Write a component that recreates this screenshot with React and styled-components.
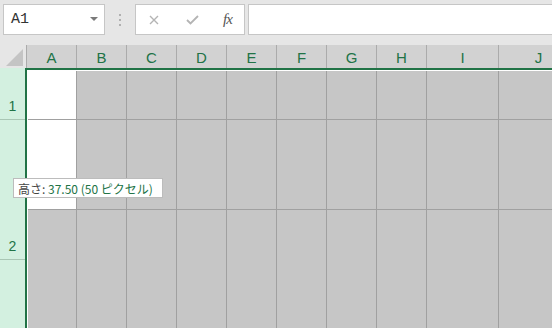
import styled, { createGlobalStyle } from "styled-components";

const Global = createGlobalStyle`
  html, body { margin: 0; padding: 0; }
  body {
    width: 552px;
    height: 328px;
    overflow: hidden;
    background: #e6e6e6;
    font-family: "Liberation Sans", "Noto Sans CJK JP", sans-serif;
  }
`;

const Page = styled.div`
  position: relative;
  width: 552px;
  height: 328px;
  overflow: hidden;
  display: flex;
  flex-direction: column;
`;

const Toolbar = styled.div`
  height: 45px;
  box-sizing: border-box;
  padding: 4px 0 0 3px;
  display: flex;
  align-items: flex-start;
  background: #e6e6e6;
`;

const NameBox = styled.div`
  width: 102px;
  height: 31px;
  box-sizing: border-box;
  background: #fff;
  border: 1px solid #c6c6c6;
  display: flex;
  align-items: center;
  justify-content: space-between;
  padding: 0 6px 0 7px;
  font-family: "Liberation Mono", monospace;
  font-size: 15px;
  color: #333;
`;

const Caret = styled.span`
  width: 0;
  height: 0;
  border-left: 4px solid transparent;
  border-right: 4px solid transparent;
  border-top: 4px solid #7a7a7a;
  margin-top: -2px;
`;

const Grip = styled.div`
  width: 30px;
  height: 31px;
  display: flex;
  flex-direction: column;
  align-items: center;
  justify-content: center;
  gap: 3px;
  span {
    width: 2px;
    height: 2px;
    background: #b0b0b0;
  }
`;

const ButtonBox = styled.div`
  width: 110px;
  height: 31px;
  box-sizing: border-box;
  background: #fff;
  border: 1px solid #c6c6c6;
  display: flex;
  align-items: center;
  padding-left: 13px;
`;

const IconSlot = styled.div`
  width: ${(p) => p.w}px;
  height: 29px;
  display: flex;
  align-items: center;
`;

const Fx = styled.span`
  font-family: "Liberation Serif", serif;
  font-style: italic;
  font-size: 15px;
  color: #555;
  letter-spacing: -1px;
`;

const FormulaInput = styled.div`
  flex: 1;
  height: 31px;
  margin-left: 3px;
  margin-right: -10px;
  box-sizing: border-box;
  background: #fff;
  border: 1px solid #c6c6c6;
`;

const HeaderRow = styled.div`
  height: 23px;
  display: flex;
`;

const Corner = styled.div`
  width: 27px;
  flex-shrink: 0;
  box-sizing: border-box;
  border-right: 1px solid #ababab;
  background: #e6e6e6;
  position: relative;
  svg { position: absolute; right: 3px; bottom: 2px; }
`;

const ColHead = styled.div`
  width: ${(p) => p.w}px;
  flex-shrink: 0;
  box-sizing: border-box;
  border-right: 1px solid #ababab;
  background: #d2d2d2;
  color: #217346;
  font-size: 15px;
  display: flex;
  align-items: center;
  justify-content: center;
  padding-top: 1px;
`;

const Body = styled.div`
  flex: 1;
  display: flex;
  min-height: 0;
`;

const RowHeads = styled.div`
  width: 25px;
  flex-shrink: 0;
  background: #d3f0e0;
  display: flex;
  flex-direction: column;
`;

const RowHead = styled.div`
  height: ${(p) => p.h}px;
  flex-shrink: 0;
  box-sizing: border-box;
  border-bottom: 1px solid #a9c6b4;
  color: #217346;
  font-size: 14px;
  display: flex;
  align-items: flex-end;
  justify-content: center;
  padding-bottom: 5px;
`;

const Grid = styled.div`
  flex: 1;
  border-top: 2px solid #217346;
  border-left: 2px solid #217346;
  background: #fff;
  padding: 1px 0 0 1px;
  display: flex;
  flex-direction: column;
  overflow: hidden;
`;

const GridRow = styled.div`
  display: flex;
  height: ${(p) => (p.h ? `${p.h}px` : "auto")};
  flex: ${(p) => (p.h ? "0 0 auto" : 1)};
`;

const Cell = styled.div`
  width: ${(p) => p.w}px;
  flex-shrink: 0;
  box-sizing: border-box;
  background: ${(p) => (p.white ? "#fff" : "#c6c6c6")};
  border-right: 1px solid #a0a0a0;
  border-bottom: ${(p) => (p.line ? "1px solid #a0a0a0" : "none")};
`;

const Tip = styled.div`
  position: absolute;
  left: 13px;
  top: 178px;
  width: 150px;
  height: 20px;
  box-sizing: border-box;
  background: #fff;
  border: 1px solid #bcbcbc;
  padding-left: 4px;
  display: flex;
  align-items: center;
  font-family: "Noto Sans CJK JP", sans-serif;
  font-size: 12px;
  white-space: nowrap;
  color: #444;
  span { color: #217346; }
`;

const cols = [
  { l: "A", w: 50 },
  { l: "B", w: 50 },
  { l: "C", w: 50 },
  { l: "D", w: 50 },
  { l: "E", w: 50 },
  { l: "F", w: 50 },
  { l: "G", w: 50 },
  { l: "H", w: 50 },
  { l: "I", w: 72 },
  { l: "J", w: 80 },
];

// grid cells: A is 1px narrower because of the white inner gutter
const gridCols = cols.map((c, i) => (i === 0 ? { ...c, w: 49 } : c));

const rows = [
  { h: 49, line: true, whiteA: true },
  { h: 90, line: true, whiteA: true },
  { h: 0, line: false, whiteA: false },
];

export default function App() {
  return (
    <Page>
      <Global />
      <Toolbar>
        <NameBox>
          A1
          <Caret />
        </NameBox>
        <Grip>
          <span />
          <span />
          <span />
        </Grip>
        <ButtonBox>
          <IconSlot w={37}>
            <svg width="10" height="10" viewBox="0 0 10 10">
              <path d="M1 1L9 9M9 1L1 9" stroke="#b4b4b4" strokeWidth="1.4" fill="none" />
            </svg>
          </IconSlot>
          <IconSlot w={37}>
            <svg width="13" height="10" viewBox="0 0 13 10">
              <path d="M1 5L4.5 8.5L12 1" stroke="#b4b4b4" strokeWidth="1.8" fill="none" />
            </svg>
          </IconSlot>
          <IconSlot w={20}>
            <Fx>fx</Fx>
          </IconSlot>
        </ButtonBox>
        <FormulaInput />
      </Toolbar>
      <HeaderRow>
        <Corner>
          <svg width="17" height="17" viewBox="0 0 17 17">
            <path d="M17 0L17 17L0 17Z" fill="#c4c4c4" />
          </svg>
        </Corner>
        {cols.map((c) => (
          <ColHead key={c.l} w={c.w}>{c.l}</ColHead>
        ))}
      </HeaderRow>
      <Body>
        <RowHeads>
          <RowHead h={52}>1</RowHead>
          <RowHead h={140}>2</RowHead>
        </RowHeads>
        <Grid>
          {rows.map((r, ri) => (
            <GridRow key={ri} h={r.h || undefined}>
              {gridCols.map((c, ci) => (
                <Cell key={c.l} w={c.w} line={r.line} white={ci === 0 && r.whiteA} />
              ))}
            </GridRow>
          ))}
        </Grid>
      </Body>
      <Tip>
        高さ:&nbsp;<span>37.50 (50 ピクセル)</span>
      </Tip>
    </Page>
  );
}
